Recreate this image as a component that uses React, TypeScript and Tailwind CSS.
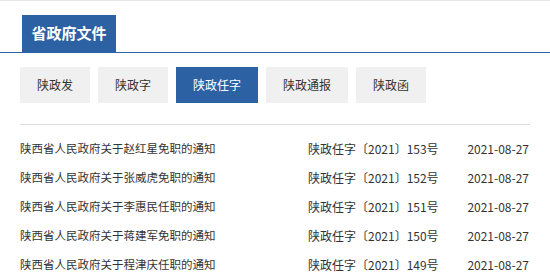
import React from "react";

const rows = [
  ["陕西省人民政府关于赵红星免职的通知", "陕政任字〔2021〕153号", "2021-08-27"],
  ["陕西省人民政府关于张威虎免职的通知", "陕政任字〔2021〕152号", "2021-08-27"],
  ["陕西省人民政府关于李惠民任职的通知", "陕政任字〔2021〕151号", "2021-08-27"],
  ["陕西省人民政府关于蒋建军免职的通知", "陕政任字〔2021〕150号", "2021-08-27"],
  ["陕西省人民政府关于程津庆任职的通知", "陕政任字〔2021〕149号", "2021-08-27"],
];

const btns = ["陕政发", "陕政字", "陕政任字", "陕政通报", "陕政函"];

export default function App() {
  return (
    <div
      className="w-[550px] h-[276px] overflow-hidden bg-white border-t border-[#e6e6e6]"
      style={{ fontFamily: '"Microsoft YaHei", "Noto Sans CJK SC", sans-serif' }}
    >
      <div className="pt-[14px] pl-[22px] border-b border-[#2c64a6] flex">
        <div className="w-[94px] h-[37px] bg-[#2c62a3] text-white text-[15px] font-bold flex items-center justify-center">
          省政府文件
        </div>
      </div>
      <div className="flex gap-[8px] pl-[20px] mt-[14px]">
        {btns.map((b) => (
          <div
            key={b}
            className={
              "h-[36px] px-[17px] flex items-center text-[12px] " +
              (b === "陕政任字"
                ? "bg-[#2c62a3] text-white"
                : "bg-[#f0f0f0] text-[#333]")
            }
          >
            {b}
          </div>
        ))}
      </div>
      <div className="mx-[20px] mt-[21px] border-t border-[#dcdcdc]" />
      <div className="mx-[20px] pt-[9px]">
        {rows.map((r, i) => (
          <div
            key={i}
            className="grid grid-cols-[288px_1fr_auto] h-[29px] items-center text-[12px] text-[#333]"
          >
            <span className="text-[11.5px]">{r[0]}</span>
            <span>{r[1]}</span>
            <span className="pr-[1px]">{r[2]}</span>
          </div>
        ))}
      </div>
    </div>
  );
}
